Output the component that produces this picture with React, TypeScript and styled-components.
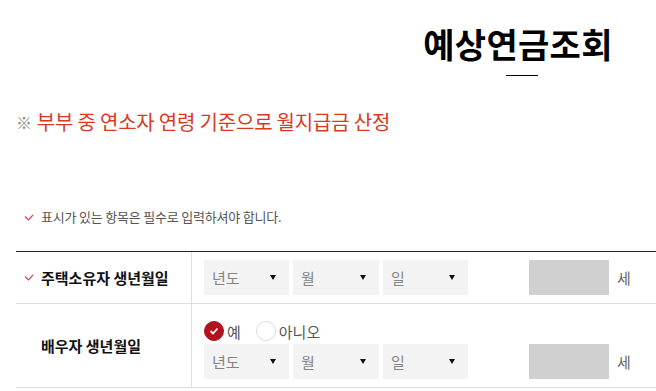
import React from "react";
import styled, { createGlobalStyle } from "styled-components";

const GlobalStyle = createGlobalStyle`
  html, body {
    margin: 0;
    padding: 0;
    background: #ffffff;
    overflow: hidden;
  }
  body {
    font-family: "Noto Sans CJK KR", "Noto Sans", sans-serif;
    color: #111;
  }
`;

const Page = styled.div`
  width: 1008px;
  margin-left: 16px;
  padding-top: 22px;
`;

const Header = styled.header`
  display: flex;
  flex-direction: column;
  align-items: center;
`;

const Title = styled.h1`
  margin: 0 0 0 -4px;
  font-size: 34px;
  line-height: 44px;
  font-weight: 700;
  color: #000;
  letter-spacing: 0.3px;
`;

const TitleBar = styled.span`
  display: block;
  width: 32px;
  height: 1px;
  background: #000;
  margin-top: 9px;
  margin-left: 4px;
`;

const Notice = styled.p`
  margin: 31px 0 0;
  font-size: 20px;
  line-height: 30px;
  color: #d9391f;
  letter-spacing: -0.2px;
  display: flex;
  align-items: center;
  gap: 5px;
`;

const NoticeMark = styled.span`
  color: #888;
  font-size: 16px;
`;

const Required = styled.p`
  margin: 71px 0 0;
  font-size: 13px;
  line-height: 18px;
  color: #555;
  display: flex;
  align-items: center;
  padding-left: 8px;
  letter-spacing: -0.2px;
`;

const CheckIcon = styled.svg`
  width: 10px;
  height: 7px;
  margin-right: 7px;
  flex: none;
`;

const Table = styled.div`
  margin-top: 25px;
  border-top: 1px solid #222;
`;

const Row = styled.div`
  display: flex;
  border-bottom: 1px solid #dedede;
`;

const LabelCell = styled.div`
  width: 176px;
  flex: none;
  box-sizing: border-box;
  border-right: 1px solid #dedede;
  display: flex;
  align-items: center;
  padding-left: 25px;
  font-size: 15px;
  font-weight: 700;
  color: #111;
  letter-spacing: 0;
`;

const LabelCheck = styled(CheckIcon)`
  margin-left: -17px;
`;

const ValueCell = styled.div<{ $tall?: boolean }>`
  flex: 1;
  display: flex;
  flex-direction: column;
  gap: 3px;
  padding: ${(p) => (p.$tall ? "17px 12px 8px" : "8px 12px 8px")};
  box-sizing: border-box;
`;

const Line = styled.div`
  display: flex;
  align-items: center;
`;

const Selects = styled.div`
  display: flex;
  gap: 4px;
`;

const SelectBox = styled.div<{ $w: number }>`
  width: ${(p) => p.$w}px;
  height: 35px;
  background: #f3f3f3;
  box-sizing: border-box;
  padding: 0 10px 0 8px;
  display: flex;
  align-items: center;
  justify-content: space-between;
  font-size: 15px;
  color: #858585;
`;

const Arrow = styled.span`
  width: 0;
  height: 0;
  border-left: 3px solid transparent;
  border-right: 3px solid transparent;
  border-top: 5px solid #111;
  margin-right: 3px;
`;

const AgeBox = styled.div`
  width: 80px;
  height: 35px;
  background: #d0d0d0;
  margin-left: 61px;
`;

const AgeUnit = styled.span`
  margin-left: 8px;
  font-size: 15px;
  color: #666;
`;

const Radios = styled.div`
  display: flex;
  align-items: center;
  height: 20px;
`;

const RadioLabel = styled.label`
  display: flex;
  align-items: center;
  gap: 3px;
  font-size: 15px;
  color: #555;
  margin-right: 15px;
`;

const RadioDot = styled.span<{ $on?: boolean }>`
  width: 20px;
  height: 20px;
  border-radius: 50%;
  box-sizing: border-box;
  background: ${(p) => (p.$on ? "#b3111d" : "#fff")};
  border: 1px solid ${(p) => (p.$on ? "#b3111d" : "#dcdcdc")};
  display: flex;
  align-items: center;
  justify-content: center;
`;

const Check = ({ color = "#c4495a" }: { color?: string }) => (
  <polyline points="1,2.5 4.5,6 9,1" fill="none" stroke={color} strokeWidth="1.2" />
);

const DateSelects = () => (
  <Line>
    <Selects>
      <SelectBox $w={85}>
        년도
        <Arrow />
      </SelectBox>
      <SelectBox $w={86}>
        월
        <Arrow />
      </SelectBox>
      <SelectBox $w={85}>
        일
        <Arrow />
      </SelectBox>
    </Selects>
    <AgeBox />
    <AgeUnit>세</AgeUnit>
  </Line>
);

export default function App() {
  return (
    <>
      <GlobalStyle />
      <Page>
        <Header>
          <Title>예상연금조회</Title>
          <TitleBar />
        </Header>
        <Notice>
          <NoticeMark>※</NoticeMark>
          부부 중 연소자 연령 기준으로 월지급금 산정
        </Notice>
        <Required>
          <CheckIcon viewBox="0 0 10 7">
            <Check />
          </CheckIcon>
          표시가 있는 항목은 필수로 입력하셔야 합니다.
        </Required>
        <Table>
          <Row>
            <LabelCell>
              <LabelCheck viewBox="0 0 10 7">
                <Check />
              </LabelCheck>
              주택소유자 생년월일
            </LabelCell>
            <ValueCell>
              <DateSelects />
            </ValueCell>
          </Row>
          <Row>
            <LabelCell>배우자 생년월일</LabelCell>
            <ValueCell $tall>
              <Radios>
                <RadioLabel>
                  <RadioDot $on>
                    <svg width="10" height="8" viewBox="0 0 10 8">
                      <polyline points="1.5,4 4,6.5 8.5,1.5" fill="none" stroke="#fff" strokeWidth="1.8" />
                    </svg>
                  </RadioDot>
                  예
                </RadioLabel>
                <RadioLabel>
                  <RadioDot />
                  아니오
                </RadioLabel>
              </Radios>
              <DateSelects />
            </ValueCell>
          </Row>
        </Table>
      </Page>
    </>
  );
}
